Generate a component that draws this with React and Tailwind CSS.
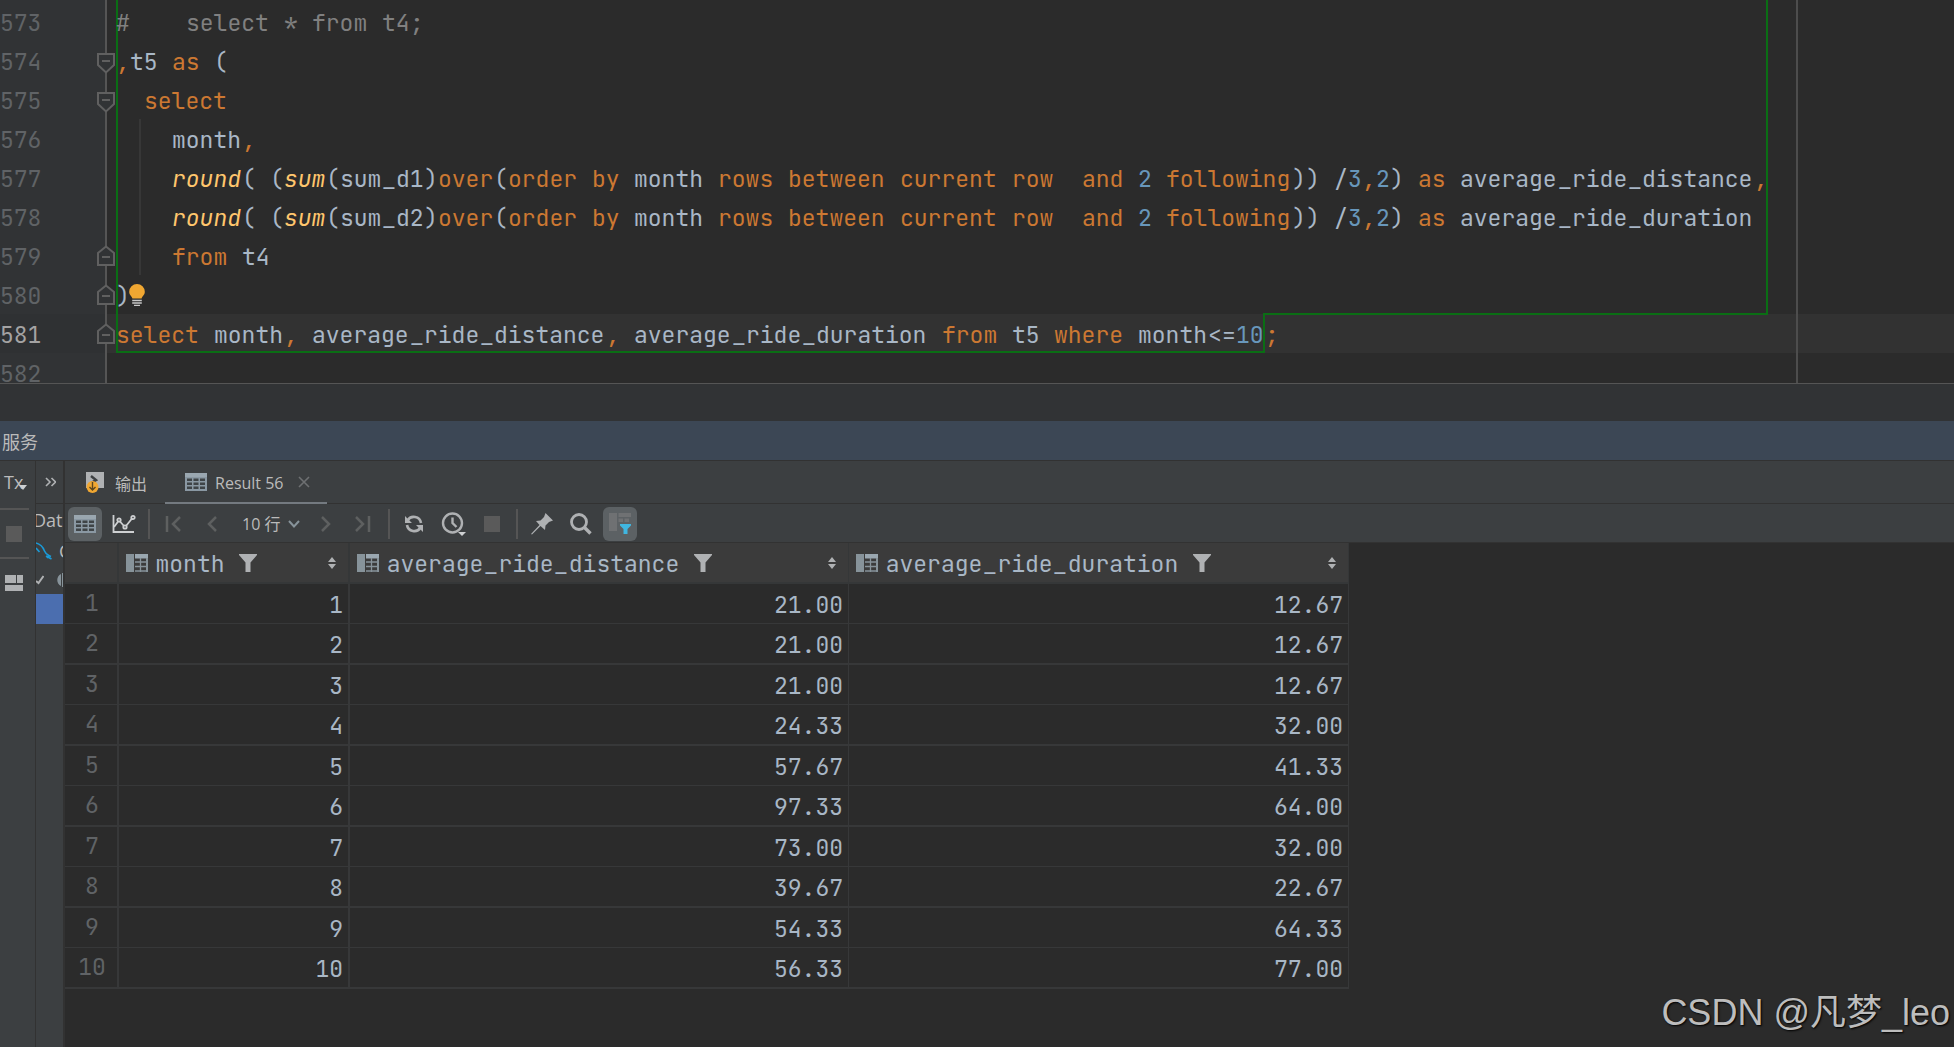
import React from 'react';
import { clsx } from 'clsx';

const CELL = 14;

const LINES = [
  { no: 573, code: '#    select * from t4;' },
  { no: 574, code: ',t5 as (', fold: 'open' },
  { no: 575, code: '  select', fold: 'open' },
  { no: 576, code: '    month,', guide: true },
  { no: 577, code: '    round( (sum(sum_d1)over(order by month rows between current row  and 2 following)) /3,2) as average_ride_distance,', guide: true },
  { no: 578, code: '    round( (sum(sum_d2)over(order by month rows between current row  and 2 following)) /3,2) as average_ride_duration', guide: true },
  { no: 579, code: '    from t4', fold: 'close', guide: true },
  { no: 580, code: ')', fold: 'close', bulb: true },
  { no: 581, code: 'select month, average_ride_distance, average_ride_duration from t5 where month<=10', fold: 'close', current: true },
  { no: 582, code: '', outside: true },
];

const ROWS = [
  ['1', '21.00', '12.67'],
  ['2', '21.00', '12.67'],
  ['3', '21.00', '12.67'],
  ['4', '24.33', '32.00'],
  ['5', '57.67', '41.33'],
  ['6', '97.33', '64.00'],
  ['7', '73.00', '32.00'],
  ['8', '39.67', '22.67'],
  ['9', '54.33', '64.33'],
  ['10', '56.33', '77.00'],
];

const KEYWORDS = ['as', 'select', 'over', 'order', 'by', 'rows', 'between', 'current', 'row', 'and', 'following', 'from', 'where', ',', ';'];
const FUNCTIONS = ['round', 'sum'];

const tokenClass = (token) => {
  if (KEYWORDS.includes(token)) return 'text-[#cc7832]';
  if (FUNCTIONS.includes(token)) return 'text-[#ffc66d] italic';
  if (/^\d+$/.test(token)) return 'text-[#6897bb]';
  return 'text-[#a9b7c6]';
};

// Every part of a token takes a whole number of character cells
const Cells = ({ text, className }) =>
  text.split(/(_)/).map((part, i) => (
    <span key={i} className={clsx('inline-block', className)} style={{ width: part.length * CELL }}>{part}</span>
  ));

const Code = ({ text }) => {
  const tokens = text.match(/\s+|\w+|[^\s\w]/g) || [];
  const comment = text.startsWith('#');
  return (
    <code className="-ml-[2px] block h-[39px] whitespace-pre font-['JetBrains_Mono','DejaVu_Sans_Mono',monospace] leading-[43px]">
      {tokens.map((token, i) => (
        <Cells key={i} text={token} className={comment ? 'text-[#808080]' : tokenClass(token)} />
      ))}
    </code>
  );
};

const FoldIcon = ({ type }) => (
  <svg
    className={clsx('absolute right-[-10px] h-[21px] w-[18px]', type === 'open' ? 'bottom-[6px]' : 'bottom-[9px]')}
    viewBox="0 0 18 21" fill="#313335" stroke="#606060" strokeWidth="2"
  >
    {type === 'open' ? <path d="M1 1H17V12L9 19.5L1 12Z" /> : <path d="M1 20H17V8L9 1.5L1 8Z" />}
    <path d={type === 'open' ? 'M5 8H13' : 'M5 12H13'} />
  </svg>
);

const BulbIcon = () => (
  <svg className="absolute bottom-[8px] left-[11px] h-[22px] w-4" viewBox="0 0 16 22">
    <path d="M8 0a7.800 7.800 0 0 1 7.800 7.800c0 3.400-2.800 4.600-3.200 6.700h-9.200C3 12.400.2 11.200.2 7.800A7.800 7.800 0 0 1 8 0Z" fill="#f0a732" />
    <path d="M3.200 16.500h9.600M3.200 19h9.600M5 21.300h6" stroke="#c8c8c8" strokeWidth="1.300" />
  </svg>
);

const EditorLine = ({ line }) => (
  <div className="flex h-[39px] shrink-0 first:h-[41px]">
    <div className={clsx(
      'relative z-10 flex w-[107px] shrink-0 items-end border-r-2 border-[#555555]',
      line.current ? 'bg-[#2f3133] text-[#a4a3a3]' : 'bg-[#313335] text-[#606366]',
    )}>
      <span className="h-[39px] font-['JetBrains_Mono','DejaVu_Sans_Mono',monospace] leading-[43px]">{line.no}</span>
      {line.fold && <FoldIcon type={line.fold} />}
    </div>
    <div className={clsx('flex flex-1 pl-[9px]', line.current && 'bg-[#323232]')}>
      {line.current ? (
        <div className="flex w-[1652px] shrink-0">
          <div className="w-[1147px] border-b-2 border-l-2 border-[#0a6e14]"><Code text={line.code} /></div>
          <div className="relative flex-1 border-l-2 border-[#0a6e14] pl-[2px]">
            <div className="absolute top-[-1px] right-0 left-[-2px] h-[2px] bg-[#0a6e14]" />
            <Code text=";" />
          </div>
        </div>
      ) : (
        <div className={clsx('relative flex w-[1652px] shrink-0 items-end', !line.outside && 'border-x-2 border-[#0a6e14]')}>
          <Code text={line.code} />
          {line.guide && <div className="absolute inset-y-0 left-[21px] w-[2px] bg-[#373737]" />}
          {line.bulb && <BulbIcon />}
        </div>
      )}
      <div className="w-[30px] shrink-0 border-r-2 border-[#4d4d4d]" />
    </div>
  </div>
);

const TableIcon = () => (
  <svg className="h-[18px] w-[22px]" viewBox="0 0 22 18">
    <path d="M0 0H22V18H0Z" fill="#8a98a3" />
    <path d="M0 0H22V4H0Z" fill="#9aa7b0" />
    <path d="M2 5.500h5v2.500H2ZM8.500 5.500h5v2.500h-5ZM15 5.500h5v2.500h-5ZM2 9.500h5V12H2ZM8.500 9.500h5V12h-5ZM15 9.500h5V12h-5ZM2 13.500h5V16H2ZM8.500 13.500h5V16h-5ZM15 13.500h5V16h-5Z" fill="#3f4447" />
  </svg>
);

const ColumnIcon = () => (
  <svg className="h-[18px] w-[22px] shrink-0" viewBox="0 0 22 18">
    <path d="M0 0H8V18H0Z" fill="#87939a" />
    <path d="M9 0H22V4.500H9Z" fill="#9aa7b0" />
    <path d="M20 4V18H22V4Z" fill="#87939a" />
    <path d="M9 8H21M9 12.500H21M9 17H21M14.500 4V18" stroke="#87939a" strokeWidth="1.300" />
  </svg>
);

const FunnelIcon = () => (
  <svg className="h-[18px] w-[18px] shrink-0" viewBox="0 0 18 18" fill="#afb1b3">
    <path d="M0 0H18V1L11.500 8.500V18H6.500V8.500L0 1Z" />
  </svg>
);

const SortIcon = () => (
  <svg className="h-3 w-2 shrink-0" viewBox="0 0 8 12" fill="#afb1b3">
    <path d="M4 0L8 5H0ZM4 12L0 7H8Z" />
  </svg>
);

const Stroke = ({ d, color = '#5e6060', w = 22 }) => (
  <svg width={w} height="22" viewBox={`0 0 ${w} 22`} fill="none" stroke={color} strokeWidth="2.500"><path d={d} /></svg>
);

const ToolButton = ({ label, active, children }) => (
  <button aria-label={label} className={clsx('flex h-[34px] w-[34px] shrink-0 items-center justify-center rounded-md', active && 'bg-[#5c6164]')}>
    {children}
  </button>
);

const Divider = () => <div className="mx-[2px] h-[30px] w-[2px] shrink-0 bg-[#555555]" />;

const HeaderCell = ({ name, className }) => (
  <th className={clsx('border-b-2 border-[#353738] bg-[#3b3b3b] p-0 font-normal', className)}>
    <div className="flex h-[39px] items-center overflow-hidden pr-3 pl-[7px]">
      <ColumnIcon />
      <span className="mt-1 mr-[14px] ml-[7px] flex"><Cells text={name} /></span>
      <FunnelIcon />
      <span className="ml-auto"><SortIcon /></span>
    </div>
  </th>
);

const Toolbar = () => (
  <div className="flex h-[39px] items-center gap-[5px] border-b border-[#323232] pt-[2px] pl-[3px]">
    <ToolButton label="Table" active><TableIcon /></ToolButton>
    <ToolButton label="Chart">
      <svg width="24" height="20" viewBox="0 0 24 20" fill="none" stroke="#ced0d2" strokeWidth="1.800">
        <path d="M1.500 1V18H22" />
        <path d="M2 13L6.500 7M8 7.500L12 12M14 12L20 4.500" />
        <circle cx="7" cy="6" r="1.700" /><circle cx="13" cy="13" r="1.700" /><circle cx="21" cy="3.500" r="1.700" />
      </svg>
    </ToolButton>
    <Divider />
    <ToolButton label="First page"><Stroke d="M4 3V19M17 4L10 11L17 18" /></ToolButton>
    <ToolButton label="Previous page"><Stroke d="M14 4L7 11L14 18" /></ToolButton>
    <button className="flex h-[34px] w-[68px] shrink-0 items-center justify-between pr-[3px] pl-[7px] text-[16px] text-[#bbbbbb]">
      10 行
      <svg width="12" height="8" viewBox="0 0 12 8" fill="none" stroke="#87939a" strokeWidth="2"><path d="M1 1L6 6.500L11 1" /></svg>
    </button>
    <ToolButton label="Next page"><Stroke d="M8 4L15 11L8 18" /></ToolButton>
    <ToolButton label="Last page"><Stroke d="M3 4L10 11L3 18M16 3V19" /></ToolButton>
    <Divider />
    <ToolButton label="Reload">
      <svg width="20" height="20" viewBox="0 0 20 20" fill="none" stroke="#afb1b3" strokeWidth="2.600">
        <path d="M3.500 6.500A7.300 7.300 0 0 1 17 9M16.500 13.500A7.300 7.300 0 0 1 3 11" />
        <path d="M1 2V9H8ZM19 18V11H12Z" fill="#afb1b3" stroke="none" />
      </svg>
    </ToolButton>
    <ToolButton label="History">
      <svg width="25" height="26" viewBox="0 0 25 26" fill="none" stroke="#afb1b3" strokeWidth="2.400">
        <circle cx="11.500" cy="12" r="9.500" />
        <path d="M11.500 6.500V12L15.500 16" />
        <path d="M17 21H25L21 25Z" fill="#ced0d2" stroke="none" />
      </svg>
    </ToolButton>
    <ToolButton label="Stop"><span className="h-4 w-4 bg-[#5a5a5a]" /></ToolButton>
    <Divider />
    <ToolButton label="Pin">
      <svg width="22" height="22" viewBox="0 0 22 22" fill="#afb1b3">
        <path d="M14.500 0L22 7.500L18 9L14.500 12.500L14 17L9.500 13L1 21.500L0 21L8.500 12L5 8L9.500 7.500L13 4Z" />
      </svg>
    </ToolButton>
    <ToolButton label="Search">
      <svg width="22" height="22" viewBox="0 0 22 22" fill="none" stroke="#afb1b3" strokeWidth="2.800">
        <circle cx="9" cy="9" r="7.500" /><path d="M14 14L20.500 20.500" strokeWidth="3.400" />
      </svg>
    </ToolButton>
    <ToolButton label="Filter rows" active>
      <svg width="22" height="22" viewBox="0 0 22 22">
        <path d="M0 0H8V18H0ZM9.500 0H22V4H9.500ZM9.500 5.500H14V9H9.500ZM15.500 5.500H20V9H15.500Z" fill="#6f7173" />
        <path d="M11 11H22V12.500L18.500 16V21H14.500V16L11 12.500Z" fill="#40b6e0" />
      </svg>
    </ToolButton>
  </div>
);

const Services = () => (
  <div className="flex flex-1 bg-[#3c3f41] font-['Open_Sans','Noto_Sans_CJK_SC',sans-serif] text-[#bbbbbb]">
    <div className="w-9 shrink-0 border-r border-[#323232]">
      <button className="flex h-[49px] w-[29px] items-center border-b-2 border-[#555555] pb-[6px] pl-1 text-lg">
        Tx
        <svg className="mt-3 -ml-1 shrink-0" width="8" height="5" viewBox="0 0 8 5" fill="#ced0d2"><path d="M0 0H8L4 5Z" /></svg>
      </button>
      <button aria-label="Stop" className="flex h-[49px] w-[29px] items-center border-b-2 border-[#555555] pl-[6px]">
        <span className="h-4 w-4 bg-[#5a5a5a]" />
      </button>
      <button aria-label="Layout" className="flex h-[48px] w-[29px] items-center pl-[5px]">
        <svg width="18" height="16" viewBox="0 0 18 16" fill="#afb1b3"><path d="M0 0H11V8H0ZM12 0H18V8H12ZM0 10H18V16H0Z" /></svg>
      </button>
    </div>
    <div className="flex w-[29px] shrink-0 flex-col overflow-hidden border-r-2 border-[#323232]">
      <button aria-label="More" className="flex h-[43px] shrink-0 items-center border-b border-[#323232] pl-[9px]">
        <svg width="11" height="10" viewBox="0 0 11 10" fill="none" stroke="#afb1b3" strokeWidth="1.600"><path d="M1 1L5 5L1 9M6.500 1L10.500 5L6.500 9" /></svg>
      </button>
      <span className="-ml-[3px] h-[32px] text-lg leading-[32px]">Data</span>
      <div className="flex h-[29px] items-center">
        <svg className="shrink-0" width="16" height="20" viewBox="0 0 16 20" fill="none" stroke="#1a9ad7" strokeWidth="1.600">
          <path d="M0 2C4 3 7 6 8.500 10S12 14 15 15.500M0 7L3.500 11M10 15L15.500 18M13 14L11 17" />
        </svg>
        <span className="ml-[7px] text-lg">C</span>
      </div>
      <div className="flex h-[29px] items-center">
        <svg className="shrink-0" width="8" height="10" viewBox="0 0 8 10" fill="none" stroke="#afb1b3" strokeWidth="2"><path d="M0 6L2.500 8L7.500 1" /></svg>
        <svg className="ml-[13px] shrink-0" width="7" height="14" viewBox="0 0 7 14" fill="#87939a"><path d="M4 1C-1 3-1 11 4 13ZM5 0H7V14H5Z" /></svg>
      </div>
      <div className="h-[30px] shrink-0 bg-[#4b6eaf]" />
    </div>

    <div className="flex min-w-0 flex-1 flex-col">
      <div role="tablist" className="flex h-[43px] border-b border-[#323232] text-[16px]">
        <button role="tab" aria-selected="false" className="flex items-center pr-[18px] pl-[21px]">
          <svg width="18" height="21" viewBox="0 0 18 21">
            <path d="M0 0H18V16H0Z" fill="#afb1b3" />
            <path d="M5 4L10 8L5 11" fill="none" stroke="#3c3f41" strokeWidth="2.500" />
            <circle cx="6.500" cy="15" r="6" fill="#f0a732" />
            <path d="M6.500 10V18M3.500 15L6.500 18L9.500 15" fill="none" stroke="#5a4520" strokeWidth="1.400" />
          </svg>
          <span className="mt-[3px] ml-[11px]">输出</span>
        </button>
        <button role="tab" aria-selected="true" className="-mb-px flex w-[162px] items-center border-b-2 border-[#747a80] pl-5">
          <TableIcon />
          <span className="mt-[3px] ml-2">Result 56</span>
          <svg className="mr-[17px] ml-auto" width="12" height="12" viewBox="0 0 12 12" stroke="#6e7072" strokeWidth="1.600"><path d="M1 1L11 11M11 1L1 11" /></svg>
        </button>
      </div>
      <Toolbar />
      <div className="flex-1 bg-[#2b2b2b]">
        <table className="w-[1284px] table-fixed border-separate border-spacing-0 font-['JetBrains_Mono','DejaVu_Sans_Mono',monospace] text-[23px] leading-[35px] text-[#a9b7c6]">
          <thead>
            <tr>
              <th aria-label="Row" className="w-[54px] border-r-2 border-b-2 border-[#353738] bg-[#3b3b3b] p-0" />
              <HeaderCell name="month" className="w-[231px] border-r-2" />
              <HeaderCell name="average_ride_distance" className="w-[499px] border-r" />
              <HeaderCell name="average_ride_duration" className="w-[500px] border-r" />
            </tr>
          </thead>
          <tbody>
            {ROWS.map(([month, distance, duration]) => (
              <tr key={month} className="text-right *:border-[#373839] odd:*:border-b even:*:border-b-2">
                <th className="border-r-2 p-0 pl-[2px] text-center font-normal text-[#606366]">
                  <span className="block h-[39px] leading-[38px]">{month}</span>
                </th>
                <td className="border-r-2 pt-1 pr-[5px] pb-0">{month}</td>
                <td className="border-r pt-1 pr-[5px] pb-0">{distance}</td>
                <td className="border-r pt-1 pr-[5px] pb-0">{duration}</td>
              </tr>
            ))}
          </tbody>
        </table>
      </div>
    </div>
  </div>
);

export default function App() {
  return (
    <div className="relative flex min-h-screen flex-col overflow-hidden bg-[#313335]">
      <div className="flex h-[384px] flex-col overflow-hidden border-b border-[#555555] bg-[#2b2b2b] text-[23px] leading-[39px] [font-variant-ligatures:none]">
        {LINES.map((line) => <EditorLine key={line.no} line={line} />)}
      </div>
      <div className="mt-[37px] flex h-10 items-center border-b border-[#323232] bg-[#3c4755] pl-[2px] font-['Noto_Sans_CJK_SC',sans-serif] text-lg text-[#bbbbbb]">
        服务
      </div>
      <Services />
      <div className="absolute right-1 bottom-[14px] font-['Liberation_Sans','Noto_Sans_CJK_SC',sans-serif] text-4xl text-[#bdbdbd] [text-shadow:1px_1px_2px_#000000]">
        CSDN @凡梦_leo
      </div>
    </div>
  );
}
